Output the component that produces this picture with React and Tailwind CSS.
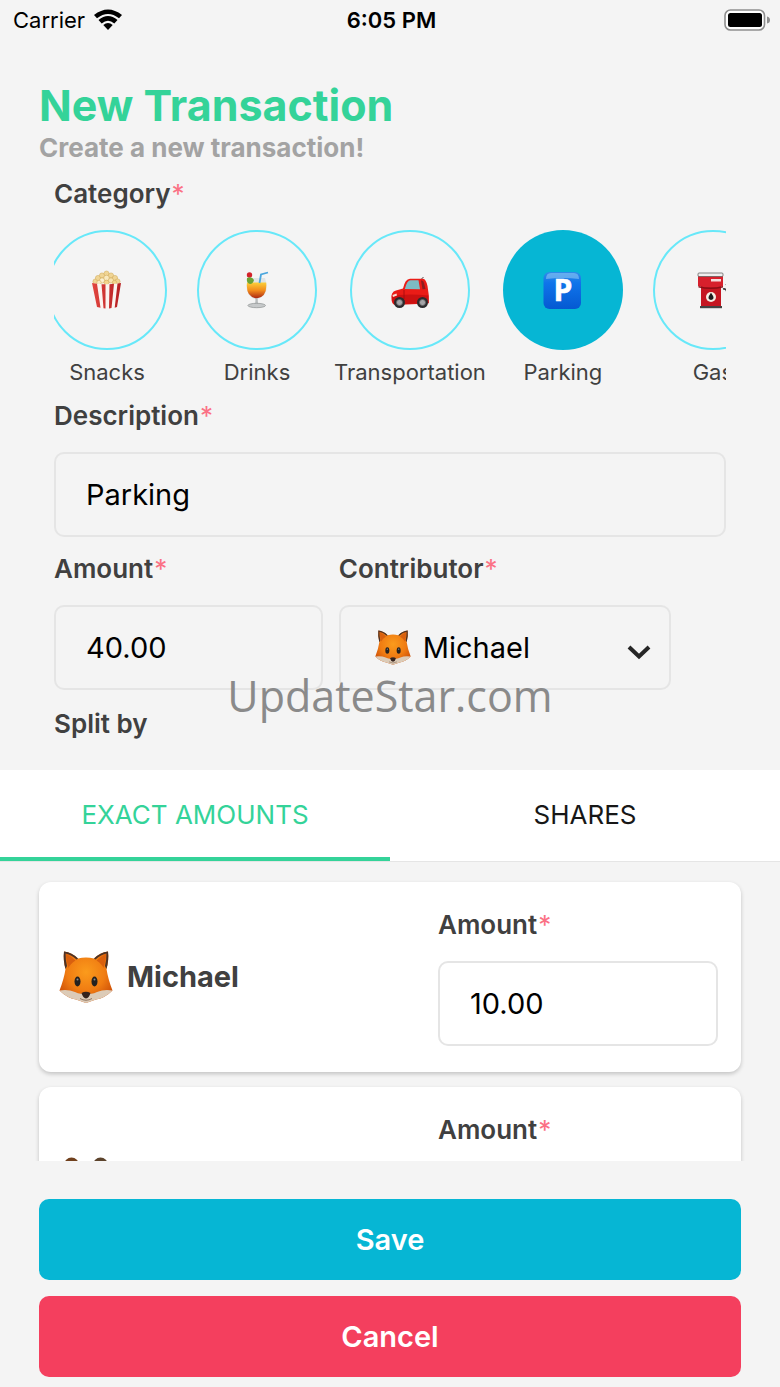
import { useState } from "react";

function Popcorn() {
  return (
    <svg className="w-10 h-10" viewBox="0 0 40 40" aria-hidden="true">
      <defs>
        <linearGradient id="popRed" x1="0" x2="1">
          <stop offset="0" stopColor="#e2463f" />
          <stop offset="1" stopColor="#b51f22" />
        </linearGradient>
      </defs>
      <g fill="#f0d595" stroke="#cfa653" strokeWidth="0.5">
        <circle cx="8.5" cy="11.5" r="2.6" />
        <circle cx="11" cy="8" r="2.6" />
        <circle cx="15" cy="5.5" r="2.6" />
        <circle cx="19.5" cy="3.5" r="2.5" />
        <circle cx="24" cy="5.500" r="2.6" />
        <circle cx="28" cy="8" r="2.6" />
        <circle cx="30.5" cy="11.500" r="2.6" />
        <circle cx="19.5" cy="8" r="2.8" fill="#f9e9bf" />
        <circle cx="15" cy="10.5" r="2.6" fill="#fbf0cf" />
        <circle cx="24" cy="10.5" r="2.6" fill="#f7e3ae" />
        <circle cx="19.5" cy="12.5" r="2.4" fill="#f3d58d" />
        <circle cx="12" cy="12.500" r="2.200" fill="#f9e9bf" />
        <circle cx="27.500" cy="12.500" r="2.200" fill="#f3d58d" />
      </g>
      <path d="M5 13 Q19.500 15.500 34 13 L30 37 Q19.500 39.500 10 37Z" fill="#fbf4f0" />
      <path d="M5 13 l5 .8 3.500 24 -3.500-.8z M14.500 14.200 h4 v24.300 l-2-.2z M22.500 14.300 l4.500-.5 -2.500 24.300 -2.500.3z M30.500 13.600l3.500-.6 -4 24 -2.300.7z" fill="url(#popRed)" />
    </svg>
  );
}

function Cocktail() {
  return (
    <svg className="w-10 h-10" viewBox="0 0 40 40" aria-hidden="true">
      <defs>
        <linearGradient id="drink" x1="0" y1="0" x2="0" y2="1">
          <stop offset="0" stopColor="#fbd03a" />
          <stop offset="0.5" stopColor="#f28a1b" />
          <stop offset="1" stopColor="#a92412" />
        </linearGradient>
      </defs>
      <path d="M11 8 Q9 15 10 20 Q12 28 19 29.5 Q27 28 29.5 20 Q30 14 28 8Z" fill="#dfe4e4" />
      <path d="M10 12.500 Q8.500 27 19.5 28.5 Q30.500 27 29.200 12.500Z" fill="url(#drink)" />
      <path d="M22.5 13 L24 4.5 L31 2.5" fill="none" stroke="#4aa6dd" strokeWidth="1.8" />
      <circle cx="12.500" cy="5" r="2.700" fill="#d3222a" />
      <path d="M10 8 q5-2 7 2 q-1 4-4 4 q-4-1-3-6z" fill="#6aa336" />
      <path d="M18.500 28.500h2.200l.3 6h-2.800z" fill="#b8bcbd" />
      <ellipse cx="19.700" cy="35.500" rx="8.800" ry="2.200" fill="#c6c9ca" stroke="#8c9091" strokeWidth="0.7" />
    </svg>
  );
}

function Car() {
  return (
    <svg className="w-10 h-10" viewBox="0 0 40 40" aria-hidden="true">
      <path d="M31 9.500 L33.500 7" stroke="#333" strokeWidth="0.9" />
      <path d="M1.500 29 Q.5 22 6 20.500 L13 18.500 Q15 9 20 8.700 L33 8.700 Q36 9 37.500 16 Q39.500 25 38.500 33.500 L5 35 Q1.500 34 1.500 29Z" fill="#ea1c17" />
      <path d="M2 27 Q12 23 38.500 25.500 L38.800 33 L5 34.500 Q2 33 2 27Z" fill="#cc1111" />
      <path d="M14.800 19 Q17 10.500 20.500 10.300 L28.500 10.300 L30 19.300Z" fill="#7dbbc4" />
      <path d="M31 10.500 Q33.500 10 34 13 L35.500 19 L32.500 19.300Z" fill="#8d1e20" />
      <path d="M14 20 v9" stroke="#9e0b0c" strokeWidth="0.8" />
      <path d="M2.500 25 l4-1.500 .5 2 -4 1.500z" fill="#f5e0d3" />
      <g fill="#2c2c2e">
        <circle cx="9.500" cy="32.500" r="5.500" />
        <circle cx="32.500" cy="32.500" r="5.500" />
      </g>
      <g fill="#a5a5a8" stroke="#636366" strokeWidth="0.800">
        <circle cx="9.500" cy="32.500" r="3" />
        <circle cx="32.500" cy="32.500" r="3" />
      </g>
    </svg>
  );
}

function ParkingSign() {
  return (
    <svg className="w-10 h-10" viewBox="0 0 40 40" aria-hidden="true">
      <defs>
        <linearGradient id="sign" x1="0" y1="0" x2="0" y2="1">
          <stop offset="0" stopColor="#2f8de9" />
          <stop offset="0.3" stopColor="#0f74ea" />
          <stop offset="1" stopColor="#0559d2" />
        </linearGradient>
      </defs>
      <rect x="0.5" y="2" width="37.500" height="37" rx="6" fill="url(#sign)" />
      <path d="M3 9 Q3 3 8 3 H31 Q36 3 36 9 Q20 7 3 9Z" fill="#8cc4f4" opacity="0.6" />
      <text x="20" y="30.500" textAnchor="middle" fontFamily="Open Sans, sans-serif" fontSize="30" fontWeight="700" fill="#fff" stroke="#fff" strokeWidth="0.6">P</text>
    </svg>
  );
}

function GasPump() {
  return (
    <svg className="w-10 h-10" viewBox="0 0 40 40" aria-hidden="true">
      <path d="M30 19 q4-1 4 5 v7 q1 4 3 1 V18 l-4-4" fill="none" stroke="#3a3a3c" strokeWidth="1.600" />
      <rect x="8" y="16" width="20" height="21" fill="#c51621" />
      <path d="M5 4 h25 v12 q-12 3 -25 0z" fill="#d7202c" />
      <rect x="5" y="3" width="25" height="3.500" rx="1" fill="#f0eeee" stroke="#555" strokeWidth="0.7" />
      <rect x="18" y="9" width="10" height="2.500" fill="#f5dede" />
      <path d="M5.500 16 q12 3 24.500 0 v1.500 q-12 3-24.500 0z" fill="#8b0e16" />
      <circle cx="18" cy="27" r="5" fill="#f5efe5" />
      <path d="M18 22.800 q5 6.500 0 7.300 q-5-.8 0-7.300z" fill="#1c1c1e" />
      <rect x="7" y="36" width="22" height="2.200" fill="#444" />
    </svg>
  );
}

function Fox({ className }) {
  return (
    <svg className={className} viewBox="0 0 54 52" aria-hidden="true">
      <defs>
        <radialGradient id="foxFace" cx="0.5" cy="0.4" r="0.6">
          <stop offset="0" stopColor="#fb9b1c" />
          <stop offset="0.6" stopColor="#f07c12" />
          <stop offset="1" stopColor="#cf5208" />
        </radialGradient>
      </defs>
      <path d="M5 0.5 Q13 1.500 19 7.500 Q27 5.500 35 7.500 Q41 1.500 49 0.500 Q50 9 47.500 18 Q49 28 53.500 39.500 Q46 47 37 48.500 L27 52 L17 48.500 Q8 47 0.500 39.500 Q5 28 6.500 18 Q4 9 5 0.500Z" fill="url(#foxFace)" />
      <path d="M5 0.500 Q13 1.500 19 7.500 L17.500 8.500 Q12 3.500 6.500 2.500 Q6.500 10 8 15 L6.500 18 Q4 9 5 0.500Z" fill="#4b3328" />
      <path d="M49 0.500 Q41 1.500 35 7.500 L36.500 8.500 Q42 3.500 47.500 2.500 Q47.500 10 46 15 L47.500 18 Q50 9 49 0.500Z" fill="#4b3328" />
      <path d="M7.500 4 Q12 5 16.500 9.500 Q11 13 9.500 17 Q7 10 7.500 4Z M46.500 4 Q42 5 37.500 9.500 Q43 13 44.500 17 Q47 10 46.500 4Z" fill="#d9600e" />
      <path d="M0.500 39.500 Q9 38 16 41 Q22 44.500 27 41 Q32 44.500 38 41 Q45 38 53.500 39.500 Q46 47 37 48.500 L27 52 L17 48.500 Q8 47 0.500 39.500Z" fill="#dccbb7" />
      <path d="M21 47.500 Q27 51 33 47.500" fill="none" stroke="#927763" strokeWidth="1" />
      <path d="M22.500 42 Q27 39.500 31.500 42 Q30 47 27 47.500 Q24 47 22.500 42Z" fill="#35231c" />
      <ellipse cx="18.500" cy="30.500" rx="3" ry="5" fill="#25211f" />
      <ellipse cx="35.500" cy="30.500" rx="3" ry="5" fill="#25211f" />
      <circle cx="18.500" cy="28.500" r="1" fill="#8c8a89" />
      <circle cx="35.500" cy="28.500" r="1" fill="#8c8a89" />
    </svg>
  );
}

function Bear({ className }) {
  return (
    <svg className={className} viewBox="0 0 54 52" aria-hidden="true">
      <circle cx="12.500" cy="9" r="7.500" fill="#70401d" />
      <circle cx="41.500" cy="9" r="7.500" fill="#5c432c" />
      <circle cx="12.500" cy="10" r="4" fill="#c98d5c" />
      <circle cx="41.500" cy="10" r="4" fill="#c98d5c" />
      <ellipse cx="27" cy="28" rx="24" ry="23" fill="#9a5d2e" />
      <ellipse cx="27" cy="38" rx="11" ry="9" fill="#e0bc93" />
      <circle cx="19" cy="25" r="2.500" fill="#221a15" />
      <circle cx="35" cy="25" r="2.500" fill="#221a15" />
      <ellipse cx="27" cy="34" rx="4" ry="3" fill="#221a15" />
    </svg>
  );
}

const categories = [
  { name: "Snacks", Icon: Popcorn },
  { name: "Drinks", Icon: Cocktail },
  { name: "Transportation", Icon: Car },
  { name: "Parking", Icon: ParkingSign },
  { name: "Gas", Icon: GasPump },
];

const members = [
  { id: "michael", name: "Michael", amount: "10.00", Avatar: Fox },
  { id: "bear", name: "", amount: "", Avatar: Bear },
];

const inputClass =
  "block w-full h-[85px] rounded-[10px] border-2 border-[#e5e5e5] bg-transparent px-[30px] text-[29px] text-black outline-none";

function FieldLabel({ htmlFor, children, required = true }) {
  return (
    <label htmlFor={htmlFor} className="block text-[26px] leading-10 font-semibold text-[#404040]">
      {children}
      {required && <span className="ml-px font-normal text-[#fb7185]">*</span>}
    </label>
  );
}

function StatusBar() {
  return (
    <div className="grid grid-cols-3 items-center h-10 shrink-0 pl-[13px] pr-[10px] text-[22px] text-black">
      <div className="flex items-center gap-2">
        Carrier
        <svg className="w-[30px] h-[22px]" viewBox="0 0 30 22" aria-hidden="true">
          <path d="M1 6 Q15 -5 29 6 L26 9.300 Q15 0.800 4 9.300Z" fill="#000" />
          <path d="M5.500 11 Q15 3 24.500 11 L21.300 14.500 Q15 9 8.700 14.500Z" fill="#000" />
          <path d="M10.300 16 Q15 11.800 19.700 16 L15 21Z" fill="#000" />
        </svg>
      </div>
      <div className="text-center font-semibold">6:05 PM</div>
      <div className="flex justify-end">
        <svg className="w-[46px] h-[22px]" viewBox="0 0 46 22" aria-hidden="true">
          <rect x="1" y="1" width="39.500" height="20" rx="5.500" fill="#fff" stroke="#8e8e8e" strokeWidth="1.600" />
          <rect x="4" y="4" width="34" height="14" rx="2.500" fill="#000" />
          <path d="M43 7.500 Q46 8 46 11 Q46 14 43 14.500Z" fill="#8e8e8e" />
        </svg>
      </div>
    </div>
  );
}

export default function App() {
  const [category, setCategory] = useState("Parking");
  const [tab, setTab] = useState("exact");

  const tabClass = (active) =>
    active
      ? "h-[91px] pt-0.5 border-b-4 border-[#34d399] text-[#34d399]"
      : "h-[91px] pt-0.5 border-b-4 border-transparent text-[#171717]";

  return (
    <div className="h-screen flex flex-col bg-[#f4f4f4] font-['Inter',sans-serif]">
      <StatusBar />

      {/* Page heading */}
      <header className="shrink-0 px-[39px] pt-10">
        <h1 className="text-[43px] leading-[50px] font-bold text-[#34d399]">New Transaction</h1>
        <p className="text-[26px] leading-9 font-bold text-[#a3a3a3]">Create a new transaction!</p>
      </header>

      <section className="relative shrink-0 px-[54px] pt-2 pb-[26px]">
        {/* Category picker */}
        <FieldLabel>Category</FieldLabel>
        <div className="mt-4 overflow-hidden">
          <div className="flex -ml-[22px]">
            {categories.map(({ name, Icon }) => (
              <button
                key={name}
                type="button"
                aria-pressed={category === name}
                onClick={() => setCategory(name)}
                className="flex flex-col items-center shrink-0 min-w-[150px] px-0.5 cursor-pointer"
              >
                <span
                  className={
                    category === name
                      ? "flex items-center justify-center w-[120px] h-[120px] rounded-full bg-[#06b6d4]"
                      : "flex items-center justify-center w-[120px] h-[120px] rounded-full border-2 border-[#67e8f9]"
                  }
                >
                  <Icon />
                </span>
                <span className="mt-1 text-[22px] leading-9 text-[#404040]">{name}</span>
              </button>
            ))}
          </div>
        </div>

        <div className="mt-1.5">
          <FieldLabel htmlFor="description">Description</FieldLabel>
          <input id="description" className={`${inputClass} mt-4`} defaultValue="Parking" />
        </div>

        <div className="flex mt-3">
          <div className="w-2/5">
            <FieldLabel htmlFor="amount">Amount</FieldLabel>
            <input id="amount" className={`${inputClass} mt-4`} defaultValue="40.00" />
          </div>
          <div className="w-1/2 ml-4 pr-1">
            <FieldLabel htmlFor="contributor">Contributor</FieldLabel>
            <div className="relative mt-4">
              <select id="contributor" className={`${inputClass} pl-[82px] appearance-none`} defaultValue="Michael">
                <option>Michael</option>
              </select>
              <Fox className="absolute left-9 top-[25px] w-9 h-[35px] pointer-events-none" />
              <svg
                className="absolute right-5 top-[39px] w-6 h-4 pointer-events-none"
                viewBox="0 0 24 16"
                fill="none"
                stroke="#262626"
                strokeWidth="4"
                aria-hidden="true"
              >
                <path d="M2 3 L12 12.500 L22 3" />
              </svg>
            </div>
          </div>
        </div>

        <div className="mt-3.5">
          <FieldLabel required={false}>Split by</FieldLabel>
        </div>

        {/* Watermark */}
        <div className="absolute inset-x-0 bottom-10 text-center text-[43px] leading-[68px] text-[#8a8a8a] font-['Open_Sans',sans-serif] pointer-events-none">
          UpdateStar.com
        </div>
      </section>

      {/* Split mode tabs */}
      <div role="tablist" className="grid grid-cols-2 shrink-0 bg-white border-b border-[#e5e5e5] text-[26px]">
        <button type="button" role="tab" aria-selected={tab === "exact"} onClick={() => setTab("exact")} className={tabClass(tab === "exact")}>
          EXACT AMOUNTS
        </button>
        <button type="button" role="tab" aria-selected={tab === "shares"} onClick={() => setTab("shares")} className={tabClass(tab === "shares")}>
          SHARES
        </button>
      </div>

      {/* Members */}
      <div className="flex-1 min-h-0 overflow-y-auto [scrollbar-width:none] px-[39px] pt-5">
        {members.map(({ id, name, amount, Avatar }) => (
          <div key={id} className="flex items-center justify-between mb-[15px] h-[190px] rounded-xl bg-white pl-5 pr-[23px] shadow-[0_2px_4px_rgba(0,0,0,0.2)]">
            <div className="flex items-center gap-3.5">
              <Avatar className="w-[54px] h-[52px]" />
              <span className="text-[29px] font-bold text-[#404040]">{name}</span>
            </div>
            <div className="w-[280px] pb-1">
              <FieldLabel htmlFor={`amount-${id}`}>Amount</FieldLabel>
              <input id={`amount-${id}`} className={`${inputClass} mt-4`} defaultValue={amount} />
            </div>
          </div>
        ))}
      </div>

      <footer className="flex flex-col gap-4 shrink-0 px-[39px] pt-[38px] pb-[10px] text-[29px] font-semibold text-white">
        <button type="button" className="h-[81px] rounded-[10px] bg-[#06b6d4] cursor-pointer">Save</button>
        <button type="button" className="h-[81px] rounded-[10px] bg-[#f43f5e] cursor-pointer">Cancel</button>
      </footer>
    </div>
  );
}
